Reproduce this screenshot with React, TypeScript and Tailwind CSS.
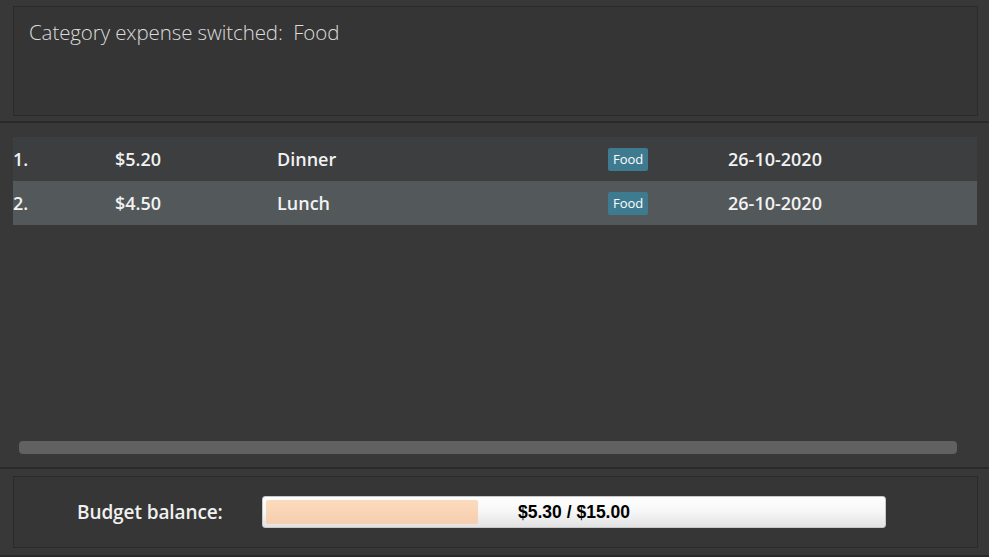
const expenses = [
  { id: 1, amount: "$5.20", description: "Dinner", tag: "Food", date: "26-10-2020" },
  { id: 2, amount: "$4.50", description: "Lunch", tag: "Food", date: "26-10-2020" },
];

const spent = 5.3;
const budget = 15;

const App = () => {
  const ratio = Math.min(spent / budget, 1);

  return (
    <div
      className="flex flex-col w-[989px] h-[557px] bg-[#383838] overflow-hidden"
      style={{ fontFamily: '"Open Sans", "Noto Sans", sans-serif' }}
    >
      {/* result display */}
      <div className="pt-[6px] pl-[13px] pr-[11px] pb-[5px]">
        <div className="h-[110px] border border-[#2a2a2a] bg-[#353535] px-[15px] pt-[10px]">
          <p className="text-[20.5px] font-light text-[#dcdcdc] tracking-[-0.1px]">
            Category expense switched:&nbsp; Food
          </p>
        </div>
      </div>
      <div className="h-[2px] bg-[#2a2a2a]" />

      {/* expense list */}
      <div className="flex flex-col flex-1 pt-[14px] px-[13px]">
        {expenses.map((e, i) => (
          <div
            key={e.id}
            className={`flex items-center h-[44px] w-[964px] text-[18px] font-semibold text-[#f2f2f2] ${
              i % 2 === 0 ? "bg-[#3c3e40]" : "bg-[#53585b]"
            }`}
          >
            <span className="w-[102px]">{e.id}.</span>
            <span className="w-[162px]">{e.amount}</span>
            <span className="w-[331px]">{e.description}</span>
            <span className="flex items-center w-[120px]">
              <span className="flex items-center h-[23px] bg-[#3e7b91] text-white text-[13px] font-normal px-[5px] pt-[1px] rounded-[2px]">
                {e.tag}
              </span>
            </span>
            <span>{e.date}</span>
          </div>
        ))}
        <div className="flex-1" />
        <div className="ml-[6px] mb-[13px] h-[13px] w-[938px] rounded-[4px] bg-[#616161]" />
      </div>
      <div className="h-[2px] bg-[#2a2a2a]" />

      {/* budget bar */}
      <div className="pt-[7px] pl-[13px] pr-[11px] pb-[7px]">
        <div className="flex items-center h-[72px] border border-[#2a2a2a] bg-[#363636]">
          <span className="ml-[63px] w-[185px] text-[19px] font-semibold text-[#f0f0f0] tracking-[-0.1px]">
            Budget balance:
          </span>
          <div className="relative flex items-center h-[32px] w-[624px] rounded-[3px] border border-[#c8c8c8] bg-gradient-to-b from-white via-[#f6f6f6] to-[#e2e2e2] p-[3px]">
            <div
              className="h-[24px] rounded-[2px] bg-gradient-to-b from-[#fcdbbd] to-[#f5cfae]"
              style={{ width: `${ratio * 600}px` }}
            />
            <span
              className="absolute inset-0 flex items-center justify-center text-[17.5px] font-bold text-black"
              style={{ fontFamily: '"Liberation Sans", Arial, sans-serif' }}
            >
              $5.30 / $15.00
            </span>
          </div>
        </div>
      </div>
      <div className="h-[2px] bg-[#2a2a2a]" />
    </div>
  );
};

export default App;
